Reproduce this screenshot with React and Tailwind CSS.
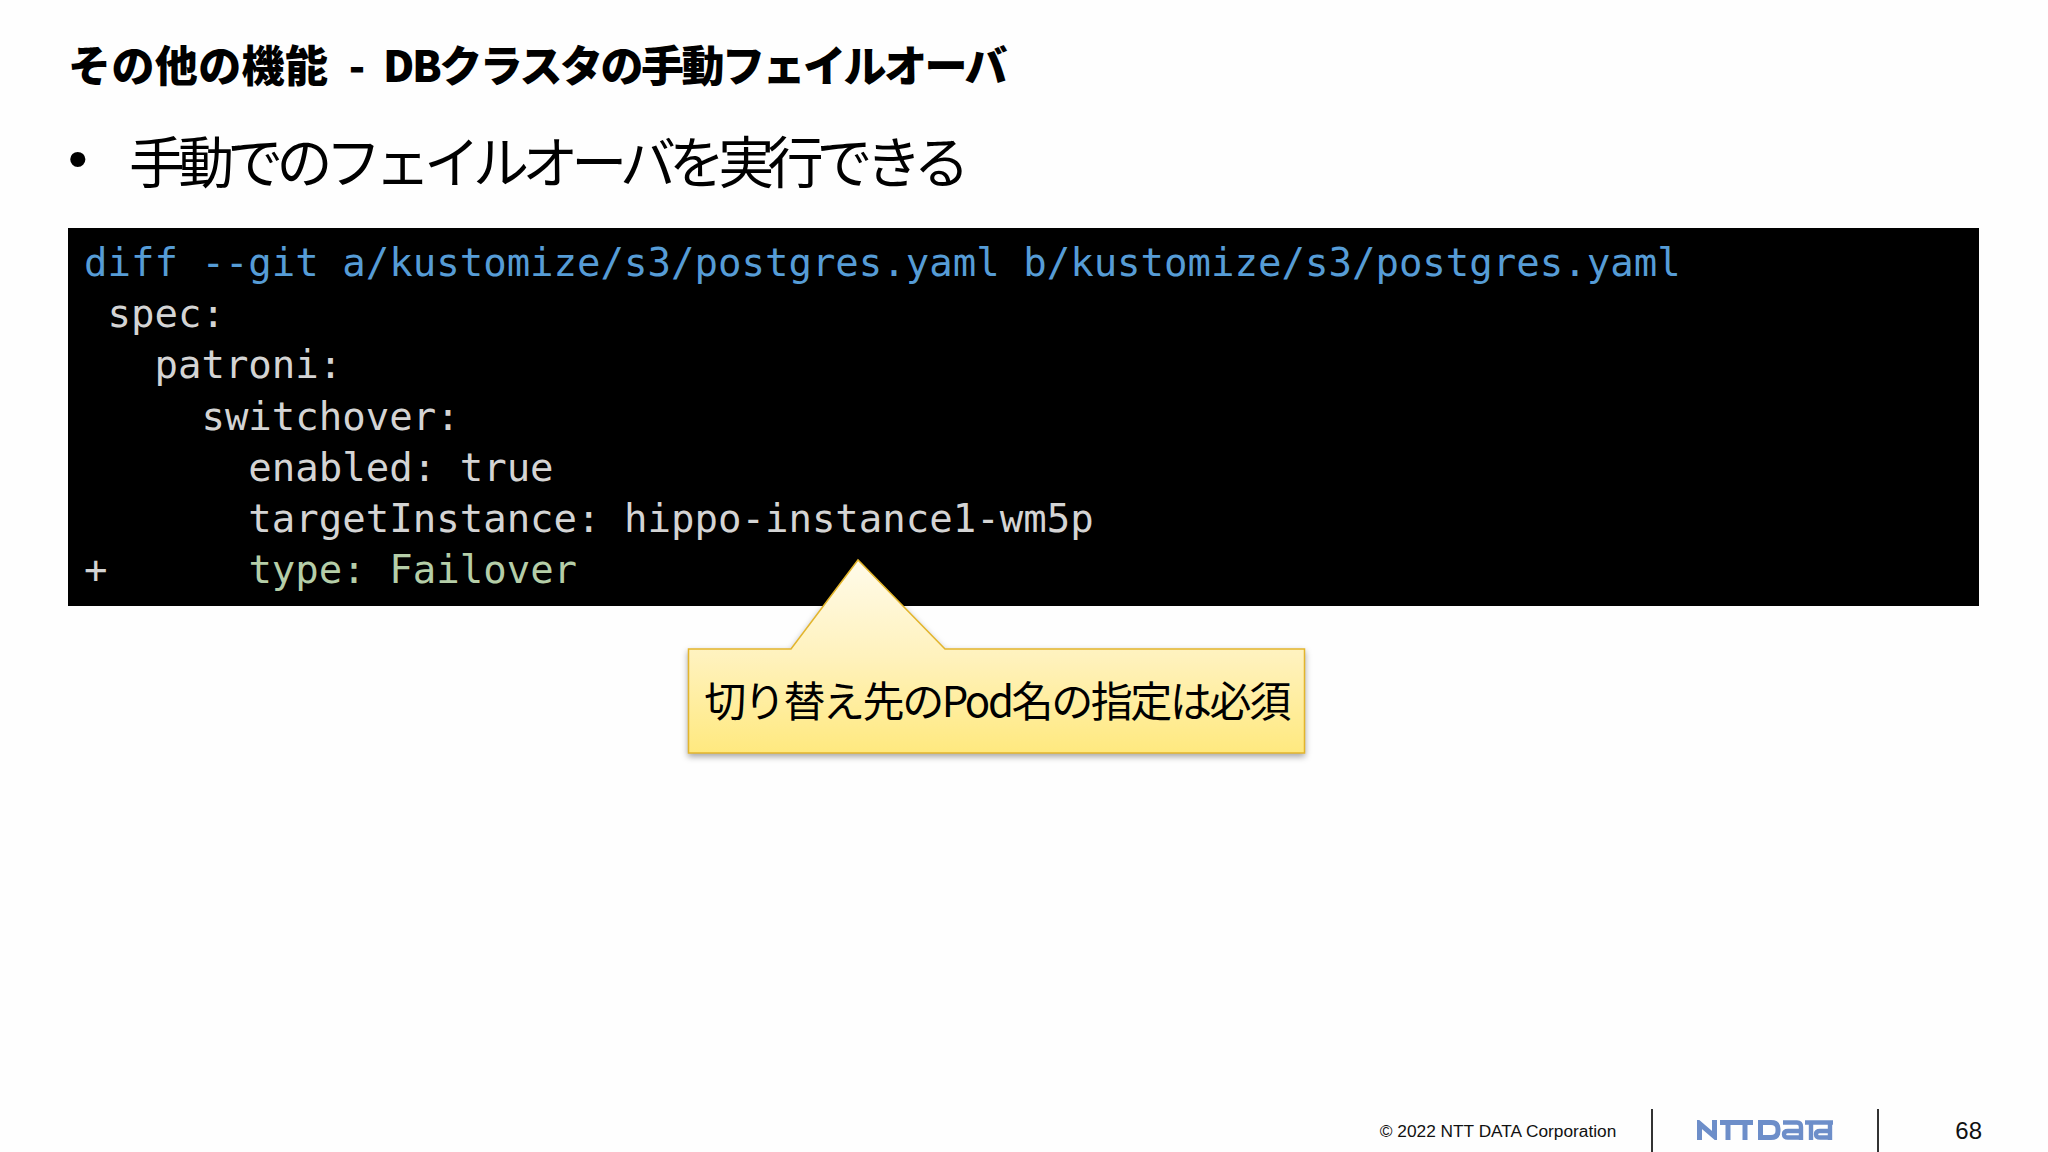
import React from 'react';

const codeLines = [
  { text: 'diff --git a/kustomize/s3/postgres.yaml b/kustomize/s3/postgres.yaml', color: 'text-[#569cd6]' },
  { text: ' spec:' },
  { text: '   patroni:' },
  { text: '     switchover:' },
  { text: '       enabled: true' },
  { text: '       targetInstance: hippo-instance1-wm5p' },
];

const NttDataLogo = () => (
  <svg width="136" height="20" viewBox="0 0 136 20" fill="none" stroke="#6d8ec9" strokeWidth="5">
    {/* NTT */}
    <path d="M2.5 20V3.5L17.5 16.5V0" />
    <path d="M23 2.5H56M31 2.5V20M48 2.5V20" />
    {/* Data */}
    <path d="M63.5 2.5H74Q81 2.5 81 9V11Q81 17.5 74 17.5H63.5Z" />
    <path d="M86 2.5H100Q104 2.5 104 7V20M104 11H91Q87 11 87 14.3T91 17.5H104" strokeWidth="4.4" />
    <path d="M108 2.5H136M114 2.5V20" strokeWidth="4.4" />
    <path d="M133 4V20M133 11H123Q119 11 119 14.3T123 17.5H133" strokeWidth="4.4" />
  </svg>
);

const Callout = () => (
  <div className="absolute left-[620px] top-[331px] w-[617px] h-[195px]">
    <svg className="absolute inset-0 overflow-visible drop-shadow-[0_3px_3px_rgba(0,0,0,0.35)]" width="617" height="195" viewBox="0 0 617 195">
      <defs>
        <linearGradient id="calloutFill" x1="0" y1="0" x2="0" y2="1">
          <stop offset="0" stopColor="#fffbea" />
          <stop offset="0.5" stopColor="#fff2bd" />
          <stop offset="1" stopColor="#ffe97f" />
        </linearGradient>
      </defs>
      <path d="M0.5 90H103L170 1L257 90H616.5V194H0.5Z" fill="url(#calloutFill)" stroke="#e3b52c" strokeWidth="1.5" />
    </svg>
    <div className="absolute left-0 right-0 top-[88px] h-[103px] flex items-center justify-center text-[42px] tracking-[-2.4px] text-black leading-none font-['Noto_Sans_CJK_JP',sans-serif] whitespace-nowrap">
      切り替え先のPod名の指定は必須
    </div>
  </div>
);

export default function App() {
  return (
    <div className="h-[1152px] w-[2048px] overflow-hidden flex flex-col bg-[#fefefe] pl-[68px] pr-[66px] text-black font-['Noto_Sans_CJK_JP',sans-serif]">
      <h1 className="mt-[34px] h-[58px] flex items-center text-[43px] font-black tracking-[-2.5px] [word-spacing:13px] leading-none whitespace-pre">
        <span className="tracking-[0.4px]">その他の機能</span> - DBクラスタの手動フェイルオーバ
      </h1>

      <div className="mt-[26px] h-[82px] flex items-center whitespace-nowrap">
        <span className="w-[61px] text-[56px] leading-none font-['Liberation_Sans',sans-serif]">•</span>
        <span className="text-[56px] tracking-[-6.85px] leading-none">手動でのフェイルオーバを実行できる</span>
      </div>

      <div className="relative mt-[28px] mr-[3px] h-[378px] bg-black pl-[16px] pt-[9px] font-['DejaVu_Sans_Mono',monospace] text-[39px] leading-[51.2px] text-[#d4d4d4] whitespace-pre">
        {codeLines.map((line, i) => (
          <div key={i} className={line.color}>{line.text}</div>
        ))}
        <div>+      <span className="text-[#b5cea8]">type: Failover</span></div>
        <Callout />
      </div>

      <div className="mt-auto h-[43px] flex items-center justify-end text-[#111] font-['Liberation_Sans',sans-serif]">
        <span className="text-[17.3px] translate-y-[1px]">© 2022 NTT DATA Corporation</span>
        <div className="ml-[35px] w-[2px] h-full bg-[#333]" />
        <div className="ml-[44px] w-[136px] flex -translate-y-[1px]">
          <NttDataLogo />
        </div>
        <div className="ml-[44px] w-[2px] h-full bg-[#333]" />
        <span className="ml-[76px] text-[24px]">68</span>
      </div>
    </div>
  );
}
